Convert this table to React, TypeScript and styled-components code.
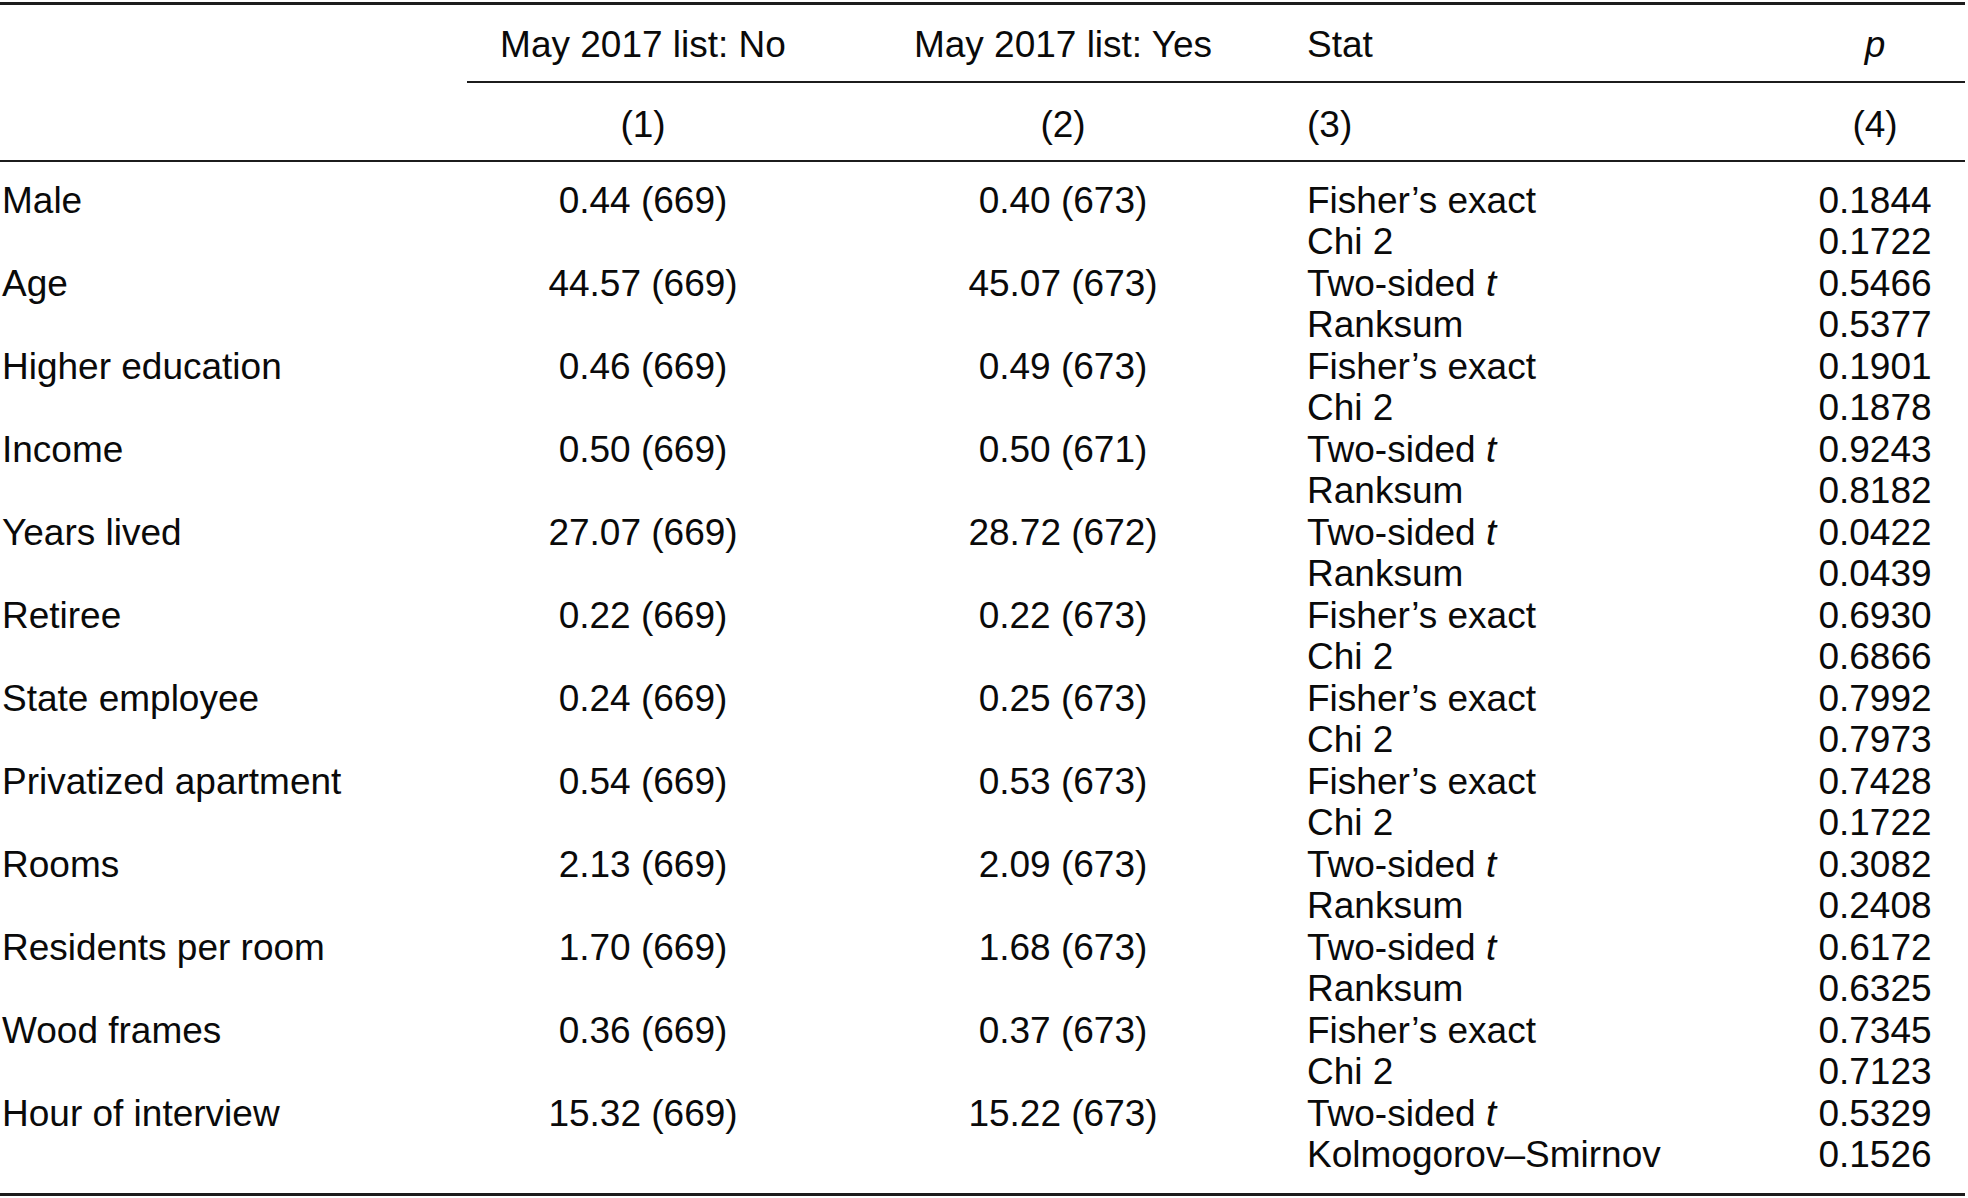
import React from "react";
import styled, { createGlobalStyle } from "styled-components";

type Test = "fisher" | "ttest" | "ks";

type Row = {
  label: string;
  no: string;
  yes: string;
  test: Test;
  p: [string, string];
};

const rows: Row[] = [
  { label: "Male", no: "0.44 (669)", yes: "0.40 (673)", test: "fisher", p: ["0.1844", "0.1722"] },
  { label: "Age", no: "44.57 (669)", yes: "45.07 (673)", test: "ttest", p: ["0.5466", "0.5377"] },
  { label: "Higher education", no: "0.46 (669)", yes: "0.49 (673)", test: "fisher", p: ["0.1901", "0.1878"] },
  { label: "Income", no: "0.50 (669)", yes: "0.50 (671)", test: "ttest", p: ["0.9243", "0.8182"] },
  { label: "Years lived", no: "27.07 (669)", yes: "28.72 (672)", test: "ttest", p: ["0.0422", "0.0439"] },
  { label: "Retiree", no: "0.22 (669)", yes: "0.22 (673)", test: "fisher", p: ["0.6930", "0.6866"] },
  { label: "State employee", no: "0.24 (669)", yes: "0.25 (673)", test: "fisher", p: ["0.7992", "0.7973"] },
  { label: "Privatized apartment", no: "0.54 (669)", yes: "0.53 (673)", test: "fisher", p: ["0.7428", "0.1722"] },
  { label: "Rooms", no: "2.13 (669)", yes: "2.09 (673)", test: "ttest", p: ["0.3082", "0.2408"] },
  { label: "Residents per room", no: "1.70 (669)", yes: "1.68 (673)", test: "ttest", p: ["0.6172", "0.6325"] },
  { label: "Wood frames", no: "0.36 (669)", yes: "0.37 (673)", test: "fisher", p: ["0.7345", "0.7123"] },
  { label: "Hour of interview", no: "15.32 (669)", yes: "15.22 (673)", test: "ks", p: ["0.5329", "0.1526"] },
];

const GlobalStyle = createGlobalStyle`
  html, body {
    margin: 0;
    padding: 0;
    background: #fff;
  }
  body {
    font-family: "Liberation Sans", Arial, Helvetica, sans-serif;
    color: #0a0a0a;
  }
`;

const Table = styled.div`
  width: 1965px;
  margin-top: 2px;
  font-size: 37px;
  line-height: 41.5px;
`;

const Rule = styled.div<{ $thick?: boolean; $indent?: number }>`
  height: 0;
  border-top: ${(p) => (p.$thick ? 3 : 2)}px solid #1c1c1c;
  margin-left: ${(p) => p.$indent || 0}px;
`;

const Grid = styled.div`
  display: grid;
  grid-template-columns: 467px 352px 488px 478px 180px;
  align-items: start;
`;

const HeadRow = styled(Grid)<{ $top: number; $bottom: number }>`
  padding-top: ${(p) => p.$top}px;
  padding-bottom: ${(p) => p.$bottom}px;
`;

const Body = styled.div`
  padding-top: 17.6px;
  padding-bottom: 17.4px;
`;

const Cell = styled.div<{ $align?: "left" | "center" }>`
  text-align: ${(p) => p.$align || "left"};
  white-space: nowrap;
`;

const Label = styled.div`
  padding-left: 2px;
  white-space: nowrap;
`;

const Stack = styled.div<{ $align?: "left" | "center" }>`
  display: flex;
  flex-direction: column;
  align-items: ${(p) => (p.$align === "center" ? "center" : "flex-start")};
  white-space: nowrap;
`;

const Em = styled.i`
  font-style: italic;
`;

const StatLines = ({ test }: { test: Test }) => {
  if (test === "fisher") {
    return (
      <Stack>
        <span>Fisher’s exact</span>
        <span>Chi 2</span>
      </Stack>
    );
  }
  return (
    <Stack>
      <span>
        Two-sided <Em>t</Em>
      </span>
      <span>{test === "ks" ? "Kolmogorov–Smirnov" : "Ranksum"}</span>
    </Stack>
  );
};

export default function App() {
  return (
    <>
      <GlobalStyle />
      <Table>
        <Rule $thick />
        <HeadRow $top={18.6} $bottom={16}>
          <Cell />
          <Cell $align="center">May 2017 list: No</Cell>
          <Cell $align="center">May 2017 list: Yes</Cell>
          <Cell>Stat</Cell>
          <Cell $align="center">
            <Em>p</Em>
          </Cell>
        </HeadRow>
        <Rule $indent={467} />
        <HeadRow $top={20.6} $bottom={15}>
          <Cell />
          <Cell $align="center">(1)</Cell>
          <Cell $align="center">(2)</Cell>
          <Cell>(3)</Cell>
          <Cell $align="center">(4)</Cell>
        </HeadRow>
        <Rule />
        <Body>
          {rows.map((r) => (
            <Grid key={r.label}>
              <Label>{r.label}</Label>
              <Cell $align="center">{r.no}</Cell>
              <Cell $align="center">{r.yes}</Cell>
              <StatLines test={r.test} />
              <Stack $align="center">
                <span>{r.p[0]}</span>
                <span>{r.p[1]}</span>
              </Stack>
            </Grid>
          ))}
        </Body>
        <Rule $thick />
      </Table>
    </>
  );
}
